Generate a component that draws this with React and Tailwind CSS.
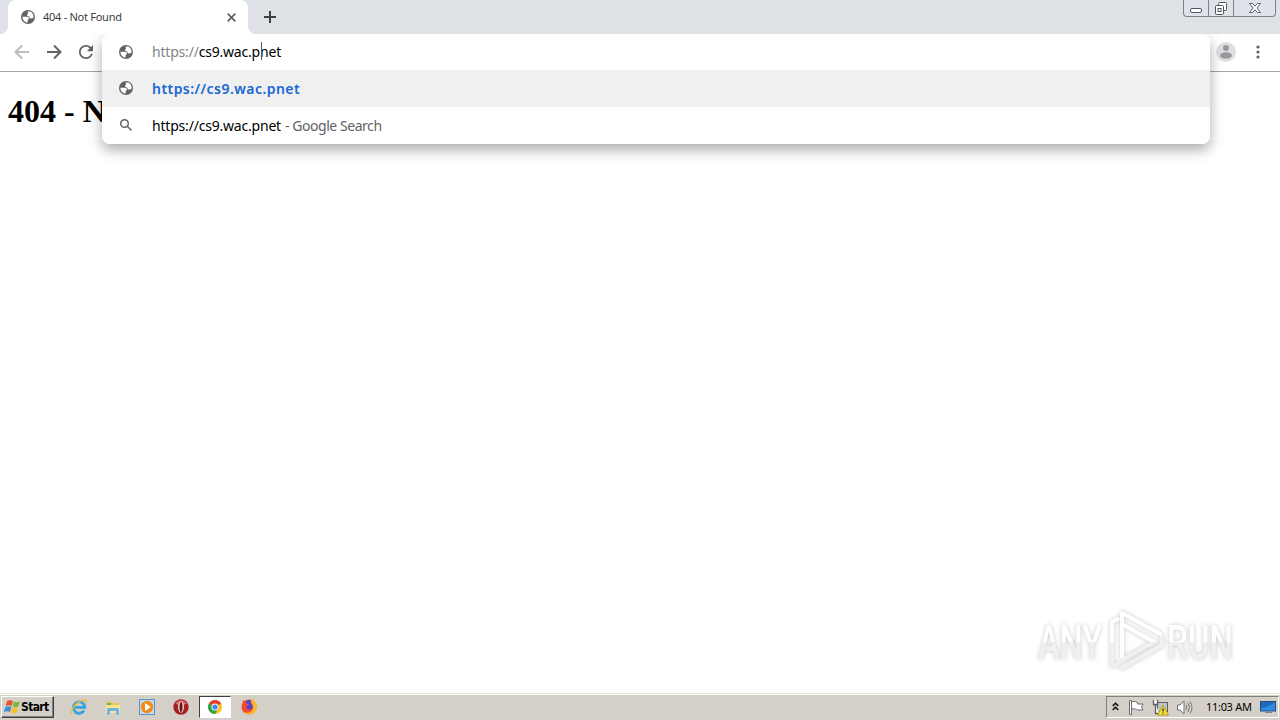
import React from 'react';

const GlobeIcon = ({ className }) => (
  <svg viewBox="2 2 20 20" className={className}>
    <circle cx="12" cy="12" r="10" fill="#5f6368" />
    <path d="M11.500 4.200h3.500c3 1.200 5 4 5 7.300 0 .8-.2 1.500-.4 2.200l-2-.2c-.8 1.200-3.600 1-3.600-1v-1.300h-2.500l-1-2.500 1.500-1.500z" fill="#fff" />
    <path d="M4 11.500h5.500c2.200 0 4 1 4 3.200l-2 1.300v3.900C7.300 19.600 4 16.200 4 11.500z" fill="#fff" />
  </svg>
);

const ArrowIcon = ({ className }) => (
  <svg viewBox="0 0 16 16" className={className} fill="none" stroke="currentColor" strokeWidth="2">
    <path d="M1 8h13M8 1.500 14.500 8 8 14.500" />
  </svg>
);

const WindowControls = () => (
  <div className="flex h-[17px] w-[93px] mr-1 rounded-b-[4px] border border-t-0 border-[#7d8189] bg-[#dfe2e8]">
    <div className="w-[25px] border-r border-[#7d8189] flex justify-center">
      <svg className="w-4 h-4" viewBox="0 0 16 16" fill="#fff" stroke="#50555f">
        <rect x="2.500" y="8.500" width="11" height="4" rx="1.500" />
      </svg>
    </div>
    <div className="w-[25px] border-r border-[#7d8189] flex justify-center">
      <svg className="w-4 h-4" viewBox="0 0 16 16" fill="#fff" stroke="#50555f">
        <rect x="5.500" y="2.500" width="8" height="8" rx="1" />
        <rect x="2.500" y="5.500" width="8" height="9" rx="1" />
        <rect x="5" y="8.500" width="3" height="3" />
      </svg>
    </div>
    <div className="flex-1 flex justify-center">
      <svg className="w-4 h-4" viewBox="0 0 16 16" fill="#fff" stroke="#50555f" strokeWidth=".9">
        <path d="M2.500 3.500h3.200L8 6.200l2.300-2.700h3.200L10 8l3.500 4.500h-3.200L8 9.800l-2.300 2.700H2.500L6 8z" />
      </svg>
    </div>
  </div>
);

const TabStrip = () => (
  <div className="h-[34px] flex items-start bg-[#dee1e6]">
    <div className="w-2 h-[34px] bg-white">
      <div className="w-2 h-[34px] bg-[#dee1e6] rounded-br-[8px]"></div>
    </div>
    <div className="w-60 h-[34px] bg-white rounded-t-[8px] flex items-center">
      <GlobeIcon className="w-[14px] h-[14px] ml-[13px]" />
      <span className="ml-2 w-[184px] text-[11px] tracking-[-0.27px] text-[#3c4043] whitespace-nowrap">404 - Not Found</span>
      <svg className="w-[9px] h-[9px]" viewBox="0 0 9 9" stroke="#5f6368" strokeWidth="1.800">
        <path d="M.7.7l7.600 7.600M8.300.7L.7 8.300" />
      </svg>
    </div>
    <div className="w-2 h-[34px] bg-white">
      <div className="w-2 h-[34px] bg-[#dee1e6] rounded-bl-[8px]"></div>
    </div>
    <svg className="w-3 h-3 mt-[11px] ml-2" viewBox="0 0 12 12" stroke="#3c4043" strokeWidth="2">
      <path d="M6 0v12M0 6h12" />
    </svg>
    <div className="ml-auto">
      <WindowControls />
    </div>
  </div>
);

const Toolbar = () => (
  <div className="h-[38px] flex items-center bg-white border-b border-[#a3a6aa] pl-[14px] pr-[14px] pb-px">
    <ArrowIcon className="w-4 h-4 text-[#b9bbbe] rotate-180" />
    <ArrowIcon className="w-4 h-4 ml-4 text-[#5f6368]" />
    <svg className="w-[14px] h-[14px] ml-[17px]" viewBox="4 4 16 16" fill="#5f6368">
      <path d="M17.650 6.350C16.200 4.900 14.210 4 12 4c-4.420 0-7.990 3.580-7.990 8s3.570 8 7.990 8c3.730 0 6.840-2.550 7.730-6h-2.080c-.82 2.330-3.040 4-5.650 4-3.310 0-6-2.690-6-6s2.690-6 6-6c1.660 0 3.140.69 4.220 1.780L13 11h7V4l-2.350 2.350z" />
    </svg>
    <svg className="w-5 h-5 ml-auto" viewBox="0 0 20 20">
      <circle cx="10" cy="10" r="10" fill="#dedfe1" />
      <circle cx="10" cy="6" r="3" fill="#96989b" />
      <ellipse cx="10" cy="13.500" rx="6" ry="3.200" fill="#96989b" />
    </svg>
    <svg className="w-4 h-4 ml-[14px]" viewBox="0 0 16 16" fill="#5f6368">
      <circle cx="8" cy="3" r="1.600" />
      <circle cx="8" cy="8" r="1.600" />
      <circle cx="8" cy="13" r="1.600" />
    </svg>
  </div>
);

const Omnibox = () => (
  <div className="absolute left-[102px] top-[34px] w-[1108px] h-[110px] rounded-[8px] bg-white overflow-hidden text-[14px] whitespace-nowrap text-black">
    <div className="h-9 flex items-center pl-[17px]">
      <GlobeIcon className="w-[14px] h-[14px]" />
      <div className="ml-[19px] mb-0.5 flex items-center tracking-[-0.2px]">
        <span className="text-[#80868b]">https://</span>
        <span>cs9.wac.p</span>
        <span className="w-px h-[18px] -mr-px translate-x-px bg-[#555]"></span>
        <span>net</span>
      </div>
    </div>
    <div className="h-[37px] flex items-center pl-[17px] bg-[#f0f0f0]">
      <GlobeIcon className="w-[14px] h-[14px] mb-px" />
      <span className="ml-[19px] font-semibold tracking-[0.45px] text-[#1967d2]">https://cs9.wac.pnet</span>
    </div>
    <div className="h-[37px] flex items-center pl-[17px]">
      <svg className="w-[14px] h-[14px] mb-px" viewBox="0 0 14 14" fill="none" stroke="#5f6368" strokeWidth="1.500">
        <circle cx="5.500" cy="5.500" r="3.800" />
        <path d="M8.300 8.300l4.200 4.200" />
      </svg>
      <span className="ml-[19px] tracking-[-0.2px]">https://cs9.wac.pnet</span>
      <span className="ml-1 tracking-[-0.45px] text-[#5f6368]">- Google Search</span>
    </div>
  </div>
);

const Watermark = () => (
  <div className="absolute left-[1036px] top-[606px] flex items-center h-[70px] drop-shadow-[0_0_2px_rgba(0,0,0,0.22)]">
    <svg className="w-[210px] h-[70px]" viewBox="0 0 210 70" fontFamily="Roboto, sans-serif">
      <defs>
        <linearGradient id="fade" x1="0" y1="0" x2="0" y2="1">
          <stop offset="0.5" stopColor="#ffffff" />
          <stop offset="0.5" stopColor="#f0f0f0" />
        </linearGradient>
      </defs>
      <g fill="url(#fade)" fontSize="48" fontWeight="500">
        <text x="2" y="53" textLength="64" lengthAdjust="spacingAndGlyphs">ANY</text>
        <text x="131" y="53" textLength="66" lengthAdjust="spacingAndGlyphs">RUN</text>
      </g>
      <g fill="none" strokeWidth="4" strokeLinejoin="round">
        <path d="M86 52V7l40 22" stroke="#fff" />
        <path d="M86 18l32 18-32 18" stroke="url(#fade)" />
        <path d="M83 12l-7 4v44l7-3" stroke="url(#fade)" />
        <path d="M84 63l42-24v-9" stroke="#f1f1f1" />
      </g>
    </svg>
  </div>
);

const WindowsFlag = () => (
  <svg className="w-[17px] h-4 shrink-0" viewBox="0 0 17 16">
    <path d="M3 2c2-1.300 4-.9 6 0L7.700 7c-2-.9-4-1-6 0z" fill="#e8542a" />
    <path d="M10 2.600c2 .9 4 .9 6-.3l-1.500 5c-2 1.200-4 1.100-6 .1z" fill="#79b83c" />
    <path d="M1.400 8c2-1.100 4-1 6 0L6 13c-2-1-4-1-6 .2z" fill="#3f8fd6" />
    <path d="M8.200 8.400c2 1 4 1 6-.1l-1.500 5c-2 1.200-4 1.100-6 .1z" fill="#f6c026" />
  </svg>
);

const IeIcon = () => (
  <svg className="w-[18px] h-[18px]" viewBox="0 0 18 18" fill="none">
    <path d="M14 12.500a5.700 5.700 0 1 1 .8-3.200H5" stroke="#39a3df" strokeWidth="2.800" />
    <path d="M2.500 16C-1 15 4 6 11 2.800c4-1.800 6-1 4.800 2" stroke="#efb935" strokeWidth="1.300" />
  </svg>
);

const FolderIcon = () => (
  <svg className="w-[18px] h-[18px]" viewBox="0 0 18 18">
    <path d="M2 3.500h5l1 1.500h7v10H2z" fill="#e9c65a" />
    <path d="M3 5h4v2H3z" fill="#63b75b" />
    <path d="M2 7h14v8H2z" fill="#f9e48f" />
    <path d="M3 16.500V12q0-2 2-2h8q2 0 2 2v4.500h-3V13H6v3.500z" fill="#6cb4e4" />
  </svg>
);

const PlayerIcon = () => (
  <svg className="w-[18px] h-[18px]" viewBox="0 0 18 18">
    <rect x="1.500" y="1.500" width="15" height="15" fill="#c2dcf2" stroke="#5c94c5" />
    <circle cx="9" cy="9" r="6.200" fill="#f18a16" />
    <path d="M7 5l6 4-6 4z" fill="#fff" />
  </svg>
);

const OperaIcon = () => (
  <svg className="w-[18px] h-[18px]" viewBox="0 0 18 18">
    <circle cx="9" cy="9" r="7.700" fill="#a81f23" />
    <path d="M3 5.500Q9-1 15 5.500 9 9 3 5.500z" fill="#d96c6b" />
    <ellipse cx="9" cy="9" rx="2.800" ry="5.600" fill="#fff" />
    <ellipse cx="9" cy="9" rx="1.600" ry="5" fill="#70151a" />
  </svg>
);

const ChromeIcon = () => (
  <svg className="w-[16px] h-[16px]" viewBox="0 0 16 16">
    <circle cx="8" cy="8" r="7" fill="#fbc116" />
    <path d="M8 8L1.940 4.500A7 7 0 0 1 14.060 4.500z" fill="#e33b2e" />
    <path d="M8 8L1.940 4.500A7 7 0 0 0 8 15l2.800-5z" fill="#2fa24c" />
    <circle cx="8" cy="8" r="3.500" fill="#fff" />
    <circle cx="8" cy="8" r="2.600" fill="#4382ee" />
  </svg>
);

const FirefoxIcon = () => (
  <svg className="w-[18px] h-[18px]" viewBox="0 0 18 18">
    <circle cx="9" cy="9" r="7.500" fill="#f64a2f" />
    <path d="M2.500 5.500L3 2l3 2.500z" fill="#f64a2f" />
    <path d="M5 4.500C6.500 2 9 1.200 11.500 2.500l1.500 5c0 3-2 4.500-4.200 4.200C6.500 11.500 5.800 9 7 7.500L9 6.500z" fill="#5c45c4" />
    <path d="M11.500.8c3.500 1.700 6 5 5.500 8.700-.6 4-4 7-8 7-2 0-4-.8-5.500-2.500 3.500 1.500 7 .8 8.800-2 1.500-2.500.7-4.500-.5-6C10.800 4.500 10.800 2.500 11.500.8z" fill="#fdb72c" />
  </svg>
);

const Tray = () => (
  <div className="w-[173px] h-[22px] mr-px flex items-center border border-t-[#808080] border-l-[#808080] border-r-white border-b-white">
    <svg className="w-[7px] h-[9px] ml-[5px] mb-0.5" viewBox="0 0 7 9" fill="none" stroke="#000" strokeWidth="1.400">
      <path d="M.7 4l2.800-2.700L6.300 4M.7 8l2.800-2.700L6.300 8" />
    </svg>
    <svg className="w-[17px] h-[17px] ml-[9px]" viewBox="0 0 17 17" fill="#fff" stroke="#6d6d6d">
      <path d="M1.500 1.500h2v14h-2z" />
      <path d="M3.500 3c2-1 4-.5 6 .5v1.500h5.500L13.500 8l1.500 3H9c-2-1.500-3.500-1.500-5.500-1z" />
    </svg>
    <svg className="w-[17px] h-[17px] ml-[7px]" viewBox="0 0 17 17" fill="#fff" stroke="#5f5f5f">
      <rect x="5.500" y="3.500" width="10" height="9" fill="#bfc3c8" />
      <path d="M1.500 1v4.500h4V1M3.500 5.500v9h4" strokeWidth="1.300" />
      <path d="M11 6.500l5.500 9.500h-11z" fill="#f7df37" stroke="#b99c18" />
      <path d="M11 9.500v3M11 13.500v1" stroke="#222" strokeWidth="1.200" />
    </svg>
    <svg className="w-[17px] h-[17px] ml-[7px]" viewBox="0 0 17 17" fill="#fff" stroke="#727272">
      <path d="M1.500 6h2.500l4-4v13l-4-4H1.500z" />
      <path d="M10 6q1.500 2.500 0 5M12 4q3 4.500 0 9M14 2.500q4 6 0 12" fill="none" />
    </svg>
    <span className="ml-[13px] w-[54px] text-[11px] tracking-[-0.3px] text-black whitespace-nowrap">11:03 AM</span>
    <svg className="w-4 h-[14px]" viewBox="0 0 16 14">
      <rect x=".5" y="1.500" width="15" height="9.500" fill="#1f69bd" stroke="#284b7a" />
      <path d="M1 8q7 0 14-6v8.500H1z" fill="#318bdd" />
      <path d="M5 12.500h7" stroke="#7b8797" />
    </svg>
  </div>
);

const Taskbar = () => (
  <div className="h-[27px] flex items-center border-t border-[#e4e1da] bg-[#d4d0c8] shadow-[inset_0_1px_0_#fff]">
    <button className="w-[53px] h-[22px] ml-px flex items-center pl-0.5 border border-t-white border-l-white border-r-[#404040] border-b-[#404040] shadow-[inset_-1px_-1px_0_#808080]">
      <WindowsFlag />
      <span className="text-[12px] font-bold tracking-[-0.65px] text-black font-['DejaVu_Sans_Condensed','DejaVu_Sans',sans-serif]">Start</span>
    </button>
    <div className="flex items-center gap-4 ml-4">
      <IeIcon />
      <FolderIcon />
      <PlayerIcon />
      <OperaIcon />
    </div>
    <div className="w-8 h-[22px] ml-[9px] flex items-center justify-center bg-white border border-t-[#404040] border-l-[#404040] border-r-white border-b-white">
      <ChromeIcon />
    </div>
    <div className="ml-[9px]">
      <FirefoxIcon />
    </div>
    <div className="ml-auto">
      <Tray />
    </div>
  </div>
);

const App = () => {
  return (
    <div className="relative w-[1280px] h-[720px] flex flex-col overflow-hidden bg-white font-['Noto_Sans',sans-serif]">
      <TabStrip />
      <Toolbar />
      <main className="flex-1 px-2 pt-[21px]">
        <h1 className="text-[32px] leading-[37px] font-bold text-black font-['Liberation_Serif',serif]">404 - Not Found</h1>
      </main>
      <Taskbar />
      {/* Shadow is clipped so it never climbs over the tab strip */}
      <div className="absolute left-[86px] top-[34px] w-[1140px] h-[140px] overflow-hidden pointer-events-none">
        <div className="w-[1108px] h-[110px] mx-4 rounded-[8px] shadow-[0_6px_14px_rgba(0,0,0,0.32)]"></div>
      </div>
      <Omnibox />
      <Watermark />
    </div>
  );
};

export default App;
